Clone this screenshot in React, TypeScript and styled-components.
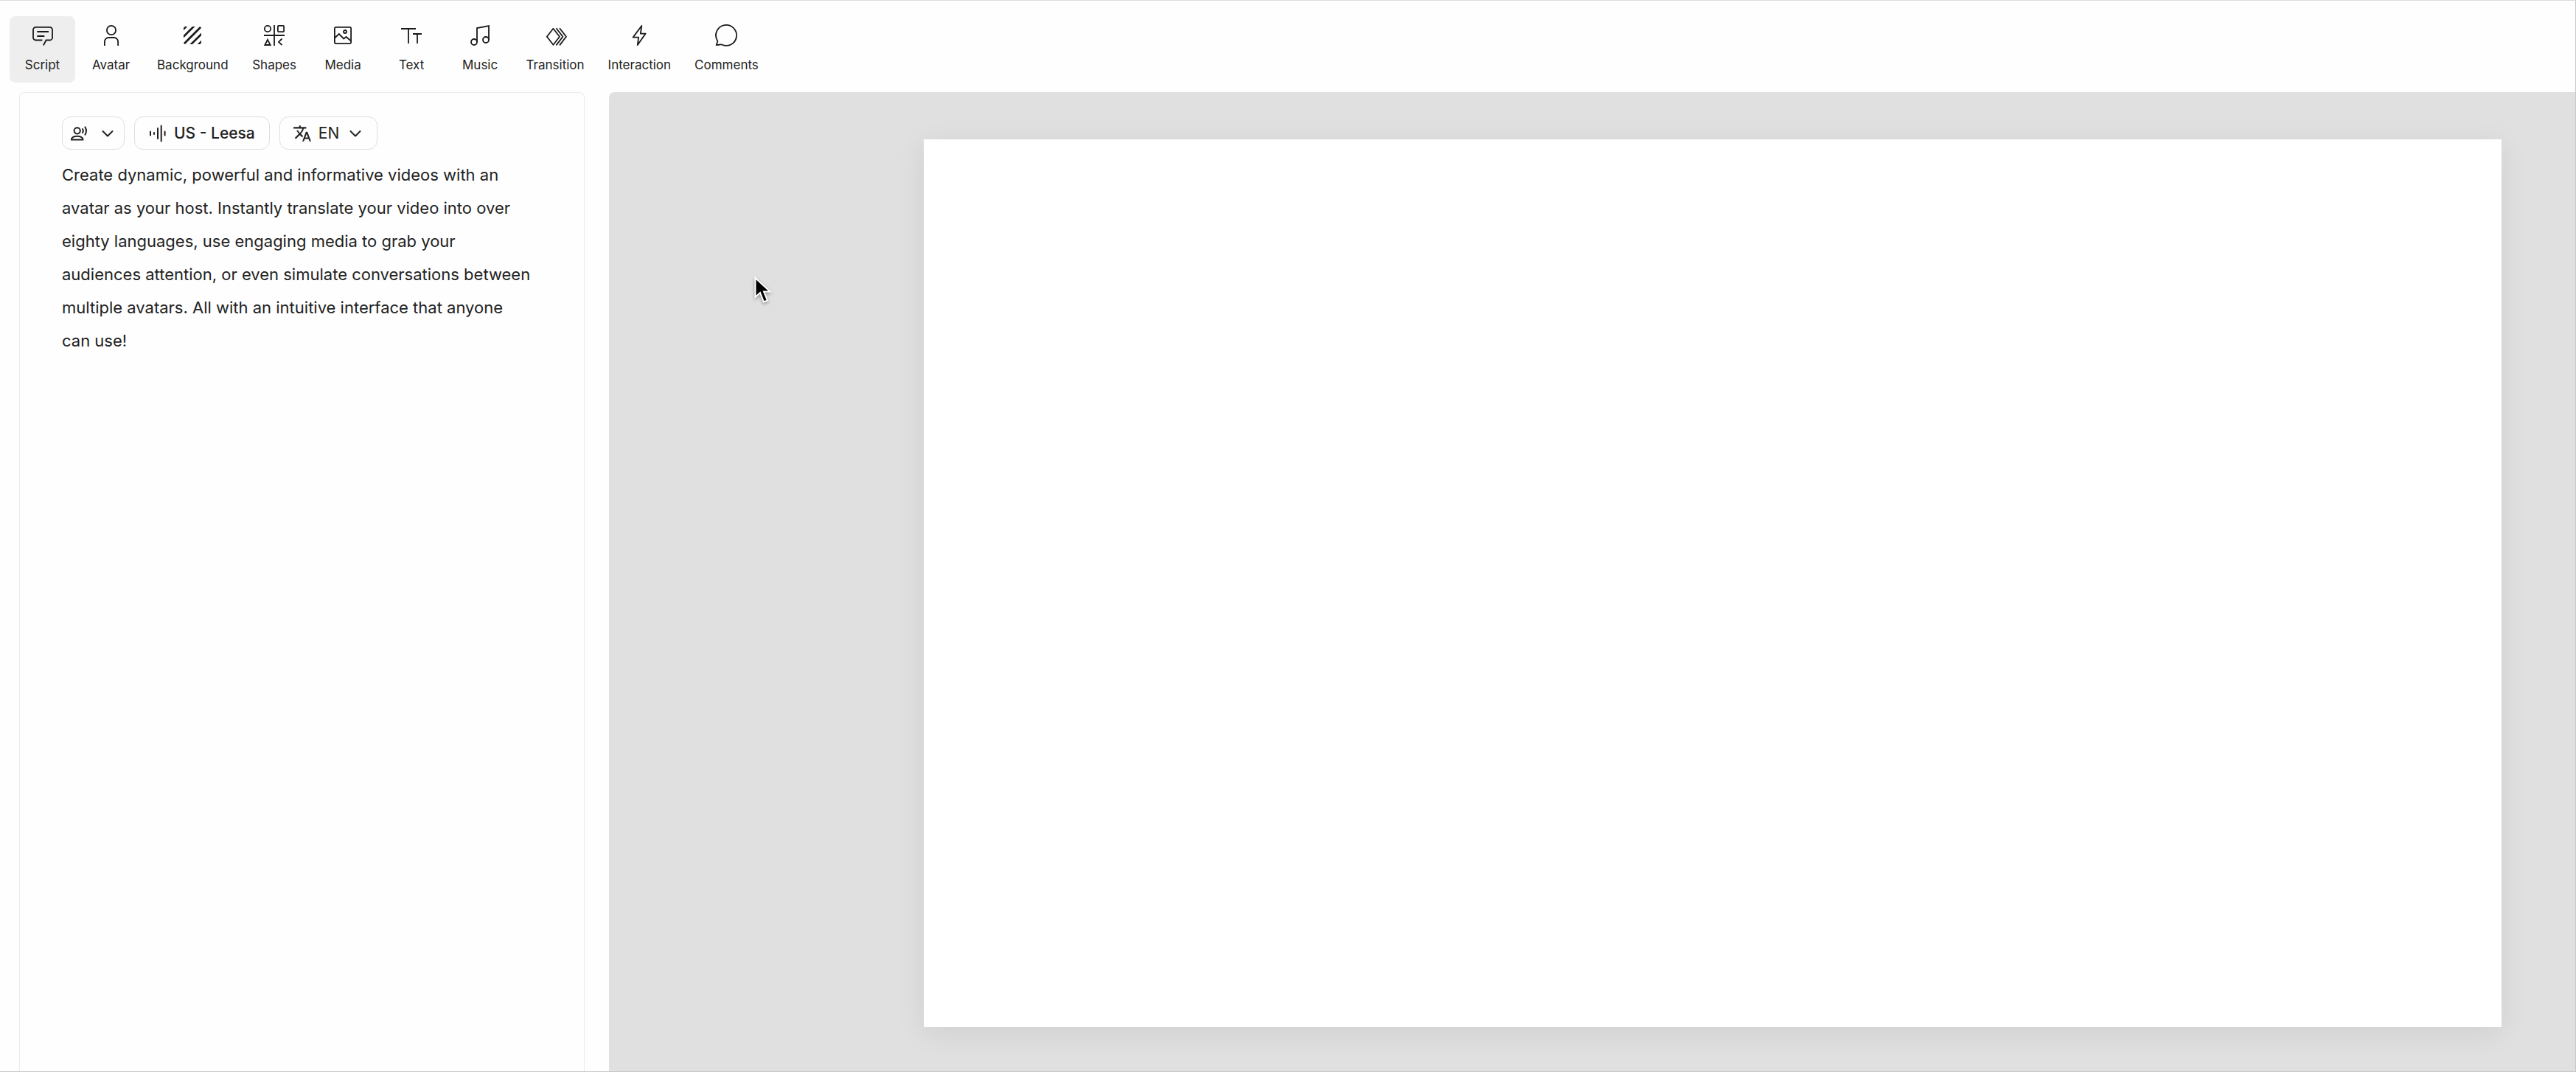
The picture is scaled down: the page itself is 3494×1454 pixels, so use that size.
import React, { useState } from "react";
import styled, { createGlobalStyle } from "styled-components";
import { MdTexture, MdTranslate } from "react-icons/md";

const GlobalStyle = createGlobalStyle`
  *, *::before, *::after { box-sizing: border-box; }
  body {
    margin: 0;
    background: #fefefe;
    color: #222;
    font-family: Inter, "Liberation Sans", sans-serif;
  }
  button, select, textarea { font: inherit; color: inherit; }
`;

const Editor = styled.div`
  display: flex;
  flex-direction: column;
  min-height: 100vh;
  border: 1px solid #c8c8c8;
  border-top-color: #dcdcdc;
  border-left: 0;
`;

const Toolbar = styled.nav`
  display: flex;
  gap: 4px;
  padding: 21px 13px 13px;
`;

const Tool = styled.button<{ $active: boolean }>`
  display: flex;
  flex-direction: column;
  align-items: center;
  gap: 16px;
  min-width: 89px;
  height: 90px;
  padding: 12px 14px;
  border: 0;
  border-radius: 8px;
  background: ${(p) => (p.$active ? "#eeeeee" : "transparent")};
  font-size: 17px;
  line-height: 20px;
  cursor: pointer;
`;

const ToolIcon = styled.svg`
  display: block;
  width: 28px;
  height: 28px;
  overflow: visible;
  fill: none;
  stroke: #1a1a1a;
  stroke-width: 1.8;
`;

const TextureBox = styled.span`
  display: flex;
  align-items: center;
  justify-content: center;
  width: 28px;
  height: 28px;
  color: #1a1a1a;

  svg {
    flex: none;
  }
`;

const Workspace = styled.main`
  display: flex;
  flex: 1;
  gap: 33px;
  padding-left: 26px;
`;

const ScriptPanel = styled.section`
  display: flex;
  flex-direction: column;
  gap: 12px;
  width: 767px;
  flex: none;
  padding: 32px 68px 0 57px;
  border: 1px solid #ebebeb;
  border-bottom: 0;
  border-radius: 7px 7px 0 0;
`;

const Chips = styled.div`
  display: flex;
  gap: 13px;
`;

const Chip = styled.button<{ $pad: number; $gap: number }>`
  display: flex;
  align-items: center;
  gap: ${(p) => p.$gap}px;
  height: 45px;
  padding: 0 ${(p) => p.$pad}px;
  border: 1px solid #dedede;
  border-radius: 12px;
  background: #fefefe;
  font-size: 21px;
  font-weight: 500;
  cursor: pointer;
`;

const LanguageSelect = styled.select`
  appearance: none;
  padding: 0;
  border: 0;
  background: transparent;
  font-weight: 400;
  cursor: pointer;
`;

const ChipIcon = styled.svg`
  display: block;
  width: 24px;
  height: 24px;
  flex: none;
  fill: none;
  stroke: #1f1f1f;
  stroke-width: 2;
  stroke-linecap: round;
`;

const ScriptText = styled.textarea`
  flex: 1;
  width: 100%;
  padding: 0;
  border: 0;
  outline: 0;
  resize: none;
  overflow: hidden;
  background: transparent;
  font-size: 22px;
  line-height: 45px;
`;

const CanvasArea = styled.section`
  flex: 1;
  min-width: 0;
  padding: 64px 100px 60px 427px;
  border-top-left-radius: 7px;
  background: #e0e0e0;
`;

const Stage = styled.div`
  aspect-ratio: 16 / 9;
  background: #fff;
  box-shadow: 0 8px 36px rgba(0, 0, 0, 0.08);
`;

const Pointer = styled.svg`
  position: absolute;
  left: 1022px;
  top: 374px;
  width: 26px;
  height: 40px;
  overflow: visible;
  filter: drop-shadow(0 2px 2px rgba(0, 0, 0, 0.35));
`;

const tools: { name: string; icon: React.ReactNode }[] = [
  {
    name: "Script",
    icon: (
      <ToolIcon viewBox="0 0 28 28">
        <path d="M13.4 20.5H4.5A3.5 3.5 0 0 1 1 17V6.300A3.500 3.500 0 0 1 4.500 2.800h19A3.500 3.500 0 0 1 27 6.300V17a3.500 3.500 0 0 1-3.500 3.500h-5L14.900 27.500M6.300 9H22M6.300 15h10" />
      </ToolIcon>
    ),
  },
  {
    name: "Avatar",
    icon: (
      <ToolIcon viewBox="0 0 28 28">
        <circle cx="14" cy="7" r="6.1" />
        <path d="M4.900 28v-5.500a5.500 5.500 0 0 1 5.500-5.500h7.200a5.500 5.500 0 0 1 5.500 5.500V28" />
      </ToolIcon>
    ),
  },
  { name: "Background", icon: <TextureBox><MdTexture size={32} /></TextureBox> },
  {
    name: "Shapes",
    icon: (
      <ToolIcon viewBox="0 0 28 28">
        <path d="M14 0v28M0 14h28" />
        <circle cx="5" cy="5" r="4.2" />
        <rect x="18.9" y="0.9" width="8.2" height="8.2" rx="1" />
        <path d="M5 19.800 8.700 27H1.300zM24.500 18.500 20 22.900l4.500 4.300" />
      </ToolIcon>
    ),
  },
  {
    name: "Media",
    icon: (
      <ToolIcon viewBox="0 0 28 28">
        <rect x="2.9" y="2.9" width="22.2" height="22.2" rx="1.5" />
        <circle cx="17" cy="9" r="2" />
        <path d="m3 17.500 5.800-5.500 6.400 6.500 3.300-2.500 6.500 5.500" />
      </ToolIcon>
    ),
  },
  {
    name: "Text",
    icon: (
      <ToolIcon viewBox="0 0 28 28">
        <path d="M0 5h20M10 5v20M16 12h12M22 12v13" />
      </ToolIcon>
    ),
  },
  {
    name: "Music",
    icon: (
      <ToolIcon viewBox="0 0 28 28">
        <path d="M10 23V4L26 1v19" />
        <circle cx="6" cy="23" r="4" />
        <circle cx="22" cy="20" r="4" />
      </ToolIcon>
    ),
  },
  {
    name: "Transition",
    icon: (
      <ToolIcon viewBox="0 0 28 28" strokeLinejoin="round">
        <path d="M11.400 4.800 20 15.800 11.400 26.800 2.800 15.800zM15.400 4.200l9 11.600-9 11.600M20 4.200l9 11.600-9 11.600" />
      </ToolIcon>
    ),
  },
  {
    name: "Interaction",
    icon: (
      <ToolIcon viewBox="0 0 28 28" strokeLinejoin="round">
        <path d="M17.300 1 5.600 16.600h7.500L11.800 27 22.700 11.600h-6.900z" />
      </ToolIcon>
    ),
  },
  {
    name: "Comments",
    icon: (
      <ToolIcon viewBox="0 0 28 28" strokeLinejoin="round">
        <path d="M.6 27.200 2.400 22Q2.200 21.500 1.600 20.300A14 14 0 1 1 8 26.500Q7 26.200 5.800 26.500z" />
      </ToolIcon>
    ),
  },
];

const Chevron = () => (
  <ChipIcon viewBox="0 0 24 24">
    <path d="m5.500 9 6.500 6.500L18.500 9" strokeLinejoin="round" />
  </ChipIcon>
);

const initialScript =
  "Create dynamic, powerful and informative videos with an avatar as your host. Instantly translate your video into over eighty languages, use engaging media to grab your audiences attention, or even simulate conversations between multiple avatars. All with an intuitive interface that anyone can use!";

export default function App() {
  const [active, setActive] = useState("Script");
  const [script, setScript] = useState(initialScript);

  return (
    <>
      <GlobalStyle />
      <Editor>
        <Toolbar aria-label="Editor tools">
          {tools.map((tool) => (
            <Tool
              key={tool.name}
              type="button"
              $active={tool.name === active}
              aria-pressed={tool.name === active}
              onClick={() => setActive(tool.name)}
            >
              {tool.icon}
              {tool.name}
            </Tool>
          ))}
        </Toolbar>
        <Workspace>
          <ScriptPanel aria-label="Script">
            <Chips>
              <Chip type="button" $pad={10} $gap={15} aria-label="Speaker" aria-haspopup="menu">
                <ChipIcon viewBox="0 0 24 24">
                  <circle cx="9.7" cy="8.3" r="4.1" />
                  <path d="M2 20.600v-.9c0-2.200 3.500-4 7.700-4s7.700 1.800 7.700 4v.9zM17 6q1.500 2.500 0 5M20.500 3.400q3 5.100 0 10.200" />
                </ChipIcon>
                <Chevron />
              </Chip>
              <Chip type="button" $pad={19} $gap={10}>
                <ChipIcon viewBox="0 0 24 24">
                  <path d="M2 9.500v5M7 11v2M12 5v14M16.700 1.500v21M21.600 9.500v5" />
                </ChipIcon>
                US - Leesa
              </Chip>
              <Chip as="label" $pad={17} $gap={9}>
                <MdTranslate size={26} />
                <LanguageSelect aria-label="Language" defaultValue="EN">
                  <option>EN</option>
                </LanguageSelect>
                <Chevron />
              </Chip>
            </Chips>
            <ScriptText
              aria-label="Script text"
              spellCheck={false}
              value={script}
              onChange={(e) => setScript(e.target.value)}
            />
          </ScriptPanel>
          <CanvasArea aria-label="Canvas">
            <Stage />
          </CanvasArea>
        </Workspace>
        <Pointer viewBox="0 0 26 40" aria-hidden="true">
          <path
            d="M2.500 3v26l6.500-6 5 12.500 5-2L14 21.500h8.500z"
            fill="#000"
            stroke="#fff"
            strokeWidth="2"
          />
        </Pointer>
      </Editor>
    </>
  );
}
